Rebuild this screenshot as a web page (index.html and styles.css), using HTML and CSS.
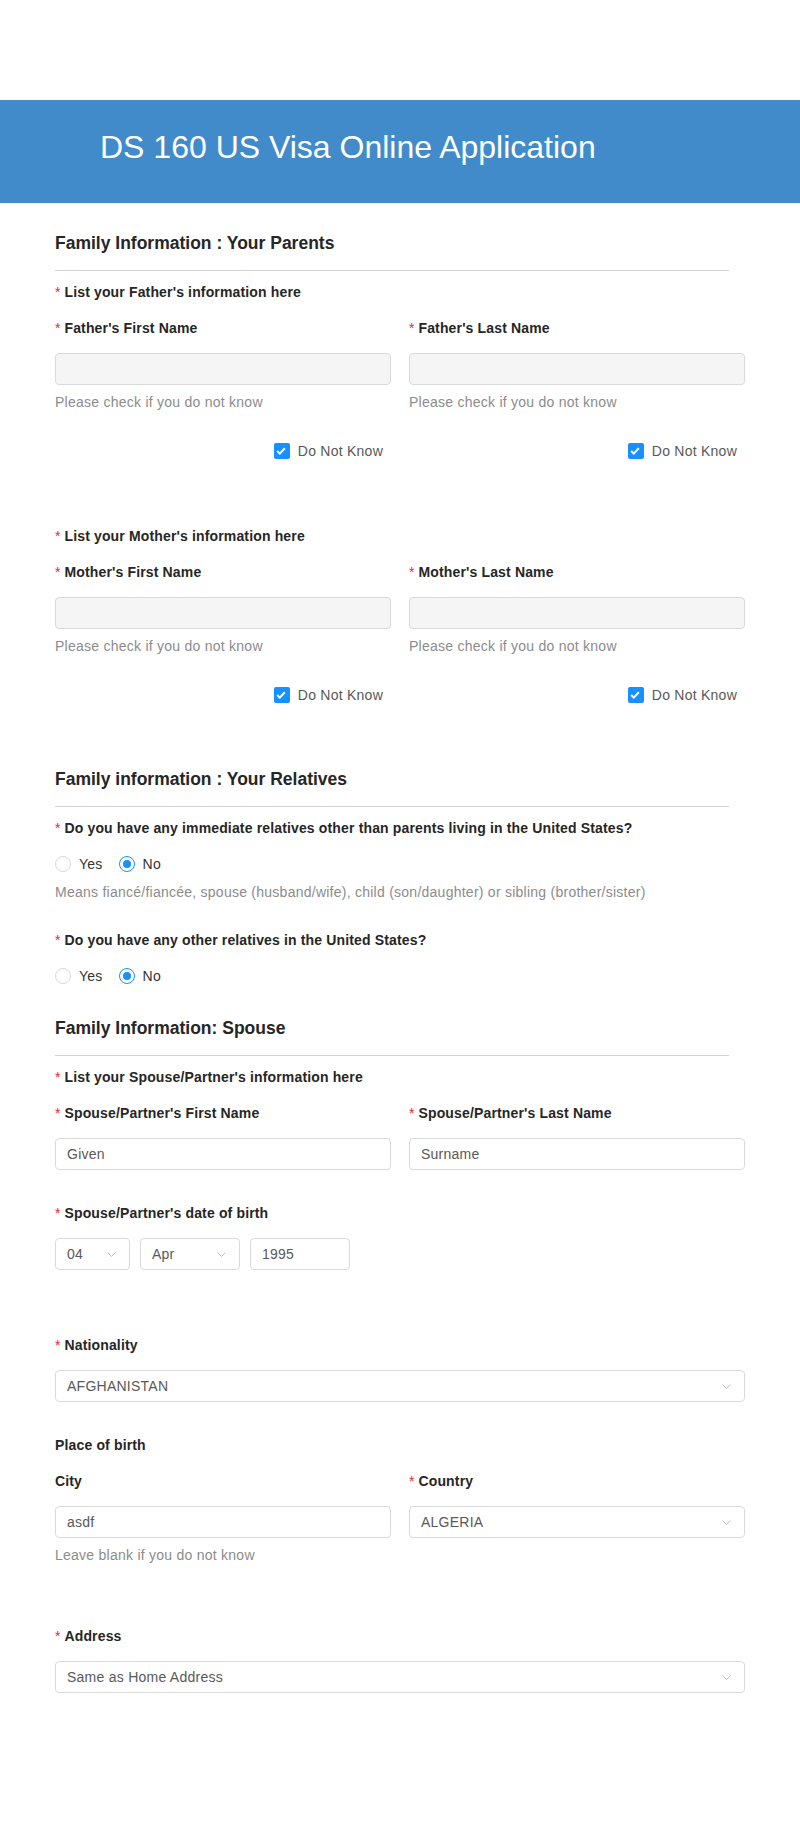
FILE: index.html
```html
<!DOCTYPE html>
<html lang="en">
<head>
<meta charset="utf-8">
<title>DS 160 US Visa Online Application</title>
<link rel="stylesheet" href="styles.css">
</head>
<body>
<header class="banner">
  <h1 class="banner-title">DS 160 US Visa Online Application</h1>
</header>
<main class="form">
  <h2 class="section-title">Family Information : Your Parents</h2>
  <div class="rule"></div>
  <div class="label"><span class="star">*</span>List your Father's information here</div>
  <div class="row item-wide">
    <div class="field">
      <div class="label"><span class="star">*</span>Father's First Name</div>
      <input class="input" type="text" disabled>
      <div class="help">Please check if you do not know</div>
      <label class="check-row"><span class="checkbox"><svg class="tick" width="10" height="8" viewBox="0 0 10 8"><path d="M1.2 4 L3.8 6.6 L8.8 1.3" fill="none" stroke="#fff" stroke-width="2"/></svg></span><span class="check-text">Do Not Know</span></label>
    </div>
    <div class="field">
      <div class="label"><span class="star">*</span>Father's Last Name</div>
      <input class="input" type="text" disabled>
      <div class="help">Please check if you do not know</div>
      <label class="check-row"><span class="checkbox"><svg class="tick" width="10" height="8" viewBox="0 0 10 8"><path d="M1.2 4 L3.8 6.6 L8.8 1.3" fill="none" stroke="#fff" stroke-width="2"/></svg></span><span class="check-text">Do Not Know</span></label>
    </div>
  </div>

  <div class="label"><span class="star">*</span>List your Mother's information here</div>
  <div class="row item-loose">
    <div class="field">
      <div class="label"><span class="star">*</span>Mother's First Name</div>
      <input class="input" type="text" disabled>
      <div class="help">Please check if you do not know</div>
      <label class="check-row"><span class="checkbox"><svg class="tick" width="10" height="8" viewBox="0 0 10 8"><path d="M1.2 4 L3.8 6.6 L8.8 1.3" fill="none" stroke="#fff" stroke-width="2"/></svg></span><span class="check-text">Do Not Know</span></label>
    </div>
    <div class="field">
      <div class="label"><span class="star">*</span>Mother's Last Name</div>
      <input class="input" type="text" disabled>
      <div class="help">Please check if you do not know</div>
      <label class="check-row"><span class="checkbox"><svg class="tick" width="10" height="8" viewBox="0 0 10 8"><path d="M1.2 4 L3.8 6.6 L8.8 1.3" fill="none" stroke="#fff" stroke-width="2"/></svg></span><span class="check-text">Do Not Know</span></label>
    </div>
  </div>

  <h2 class="section-title">Family information : Your Relatives</h2>
  <div class="rule"></div>
  <div class="field item-tight">
    <div class="label"><span class="star">*</span>Do you have any immediate relatives other than parents living in the United States?</div>
    <div class="radios">
      <span class="radio-item"><span class="radio"></span><span class="radio-text">Yes</span></span>
      <span class="radio-item"><span class="radio on"></span><span class="radio-text">No</span></span>
    </div>
    <div class="help">Means fiancé/fiancée, spouse (husband/wife), child (son/daughter) or sibling (brother/sister)</div>
  </div>
  <div class="field item-tight2">
    <div class="label"><span class="star">*</span>Do you have any other relatives in the United States?</div>
    <div class="radios">
      <span class="radio-item"><span class="radio"></span><span class="radio-text">Yes</span></span>
      <span class="radio-item"><span class="radio on"></span><span class="radio-text">No</span></span>
    </div>
  </div>

  <h2 class="section-title">Family Information: Spouse</h2>
  <div class="rule"></div>
  <div class="label"><span class="star">*</span>List your Spouse/Partner's information here</div>
  <div class="row item">
    <div class="field">
      <div class="label"><span class="star">*</span>Spouse/Partner's First Name</div>
      <input class="input" type="text" value="Given">
    </div>
    <div class="field">
      <div class="label"><span class="star">*</span>Spouse/Partner's Last Name</div>
      <input class="input" type="text" value="Surname">
    </div>
  </div>

  <div class="field item-wide2">
    <div class="label"><span class="star">*</span>Spouse/Partner's date of birth</div>
    <div class="date-row">
      <div class="select day"><span>04</span><svg class="arrow" width="9" height="5" viewBox="0 0 9 5"><path d="M0.5 0.5 L4.5 4.5 L8.5 0.5" fill="none" stroke="#bfbfbf" stroke-width="1"/></svg></div>
      <div class="select month"><span>Apr</span><svg class="arrow" width="9" height="5" viewBox="0 0 9 5"><path d="M0.5 0.5 L4.5 4.5 L8.5 0.5" fill="none" stroke="#bfbfbf" stroke-width="1"/></svg></div>
      <input class="input year" type="text" value="1995">
    </div>
  </div>

  <div class="field item">
    <div class="label"><span class="star">*</span>Nationality</div>
    <div class="select"><span>AFGHANISTAN</span><svg class="arrow" width="9" height="5" viewBox="0 0 9 5"><path d="M0.5 0.5 L4.5 4.5 L8.5 0.5" fill="none" stroke="#bfbfbf" stroke-width="1"/></svg></div>
  </div>

  <div class="label">Place of birth</div>
  <div class="row item-loose">
    <div class="field">
      <div class="label">City</div>
      <input class="input" type="text" value="asdf">
      <div class="help">Leave blank if you do not know</div>
    </div>
    <div class="field">
      <div class="label"><span class="star">*</span>Country</div>
      <div class="select"><span>ALGERIA</span><svg class="arrow" width="9" height="5" viewBox="0 0 9 5"><path d="M0.5 0.5 L4.5 4.5 L8.5 0.5" fill="none" stroke="#bfbfbf" stroke-width="1"/></svg></div>
    </div>
  </div>

  <div class="field">
    <div class="label"><span class="star">*</span>Address</div>
    <div class="select"><span>Same as Home Address</span><svg class="arrow" width="9" height="5" viewBox="0 0 9 5"><path d="M0.5 0.5 L4.5 4.5 L8.5 0.5" fill="none" stroke="#bfbfbf" stroke-width="1"/></svg></div>
  </div>
</main>
</body>
</html>
```

FILE: styles.css
```css
* {
  box-sizing: border-box;
}

html, body {
  background: #ffffff;
}

body {
  margin: 0;
  font-family: "Liberation Sans", Arial, sans-serif;
  font-size: 14px;
  letter-spacing: 0.25px;
  color: #262626;
}

.banner {
  margin-top: 100px;
  height: 103px;
  padding: 29px 0 0 100px;
  background: #418bca;
}

.banner-title {
  margin: 0;
  font-size: 32px;
  line-height: 36px;
  font-weight: normal;
  letter-spacing: 0;
  color: #ffffff;
}

.form {
  padding: 26px 55px 140px;
}

.section-title {
  margin: 0;
  font-size: 17.5px;
  line-height: 28px;
  font-weight: bold;
  letter-spacing: 0;
  color: #262626;
}

.rule {
  width: 674px;
  height: 1px;
  margin: 13px 0 10px;
  background: #d3d3d3;
}

.label {
  font-weight: bold;
  line-height: 22px;
  letter-spacing: 0.15px;
  margin-bottom: 14px;
  color: #262626;
}

.star {
  color: #f5222d;
  font-weight: normal;
  letter-spacing: 0;
  margin-right: 4px;
}

.row {
  display: grid;
  grid-template-columns: 1fr 1fr;
  column-gap: 18px;
}

.item { margin-bottom: 32px; }
.item-tight { margin-bottom: 26px; }
.item-tight2 { margin-bottom: 27px; }
.item-loose { margin-bottom: 59px; }
.item-wide { margin-bottom: 63px; }
.item-wide2 { margin-bottom: 64px; }

.input {
  display: block;
  width: 100%;
  height: 32px;
  margin: 0;
  padding: 4px 11px;
  border: 1px solid #d9d9d9;
  border-radius: 4px;
  background: #ffffff;
  font-family: "Liberation Sans", Arial, sans-serif;
  font-size: 14px;
  letter-spacing: 0.25px;
  color: #595959;
  outline: none;
}

.input:disabled {
  background: #f5f5f5;
}

.help {
  margin-top: 6px;
  line-height: 22px;
  color: #8c8c8c;
}

.check-row {
  display: flex;
  justify-content: flex-end;
  align-items: center;
  height: 22px;
  margin-top: 27px;
  color: #595959;
}

.checkbox {
  display: flex;
  align-items: center;
  justify-content: center;
  width: 16px;
  height: 16px;
  border-radius: 2px;
  background: #1890ff;
}

.tick {
  margin-left: -1px;
}

.check-text {
  padding: 0 8px;
  line-height: 22px;
}

.radios {
  display: flex;
  align-items: center;
  height: 22px;
  color: #333333;
}

.radio-item {
  display: flex;
  align-items: center;
  margin-right: 8px;
}

.radio {
  display: flex;
  align-items: center;
  justify-content: center;
  width: 16px;
  height: 16px;
  border: 1px solid #d9d9d9;
  border-radius: 50%;
  background: #ffffff;
}

.radio.on {
  border-color: #1890ff;
}

.radio.on::after {
  content: "";
  width: 8px;
  height: 8px;
  border-radius: 50%;
  background: #1890ff;
}

.radio-text {
  padding: 0 8px;
  line-height: 22px;
}

.select {
  display: flex;
  align-items: center;
  justify-content: space-between;
  height: 32px;
  padding: 0 13px 0 11px;
  border: 1px solid #d9d9d9;
  border-radius: 4px;
  background: #ffffff;
  color: #595959;
}

.arrow {
  flex: none;
}

.date-row {
  display: flex;
  gap: 10px;
}

.select.day {
  width: 75px;
}

.select.month {
  width: 100px;
}

.input.year {
  width: 100px;
}
```
